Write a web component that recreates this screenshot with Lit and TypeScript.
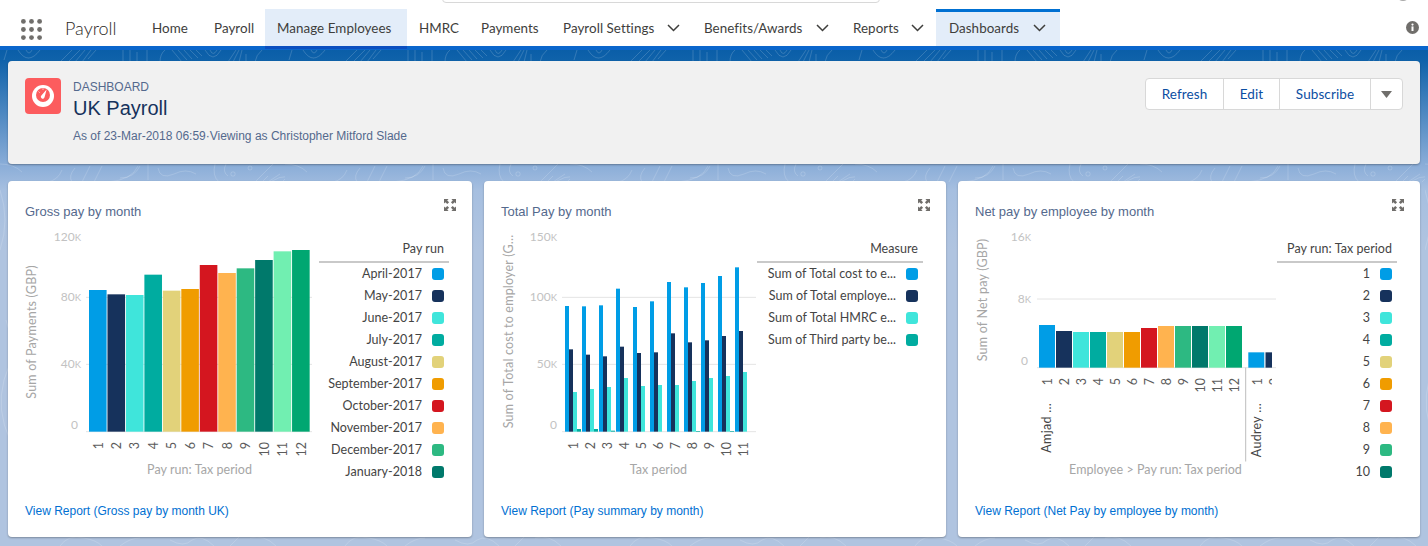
import { LitElement, html, css, svg } from "lit";
import { customElement } from "lit/decorators.js";

const PALETTE = ["#009de6", "#16325c", "#3fe5db", "#00aca0", "#e2d27a", "#f09c00", "#d4161f", "#ffb34f", "#2db982", "#00796b", "#71efb1", "#00a771"];

interface LegendDef { title: string; width: number; items: string[]; }

const zy = (v: number) => 180 + v / 3;
const NAV = [
  { t: "Home", w: 38 }, { t: "Payroll", w: 39 }, { t: "Manage Employees", w: 118, active: true }, { t: "HMRC", w: 38 }, { t: "Payments", w: 58 },
  { t: "Payroll Settings", w: 91, menu: true }, { t: "Benefits/Awards", w: 99, menu: true }, { t: "Reports", w: 45, menu: true },
  { t: "Dashboards", w: 71, menu: true, current: true },
];

const tickLabel = (x: number, y: number, num: string, k = true) => svg`<text class="tick" x=${x} y=${y + 4} text-anchor="end">${num}${k ? svg`<tspan font-size="9.5">K</tspan>` : ""}</text>`;
const rotLabel = (cx: number, top: number, t: string, cls = "xlab") => svg`<text class=${cls} transform="translate(${cx + 4.5} ${top}) rotate(-90)" text-anchor="end">${t}</text>`;
const axisTitle = (cx: number, mid: number, t: string) => svg`<text class="axis-y" transform="translate(${cx + 4.5} ${mid}) rotate(-90)" text-anchor="middle">${t}</text>`;
const grid = (x1: number, x2: number, y: number) => svg`<line class="grid" x1=${x1} x2=${x2} y1=${y} y2=${y}></line>`;

function chart1() {
  const tops = [330, 343, 345, 284, 332, 327, 255, 279, 265, 240, 214, 210];
  const base = zy(755);
  return html`<svg class="chart" width="311" height="265" viewBox="8 225 311 265">
    ${axisTitle(31, 332, "Sum of Payments (GBP)")}
    ${tickLabel(81, 237, "120")}${tickLabel(81, 297, "80")}${tickLabel(81, 364, "40")}${tickLabel(78, 425, "0", false)}
    ${grid(86, 312, zy(352))}${grid(86, 312, zy(553))}${grid(86, 312, base)}
    ${tops.map((t, i) => svg`<rect x=${89 + i * 18.46} y=${zy(t)} width="17.6" height=${base - zy(t)} fill=${PALETTE[i]}></rect>`)}
    ${tops.map((_, i) => rotLabel(98 + i * 18.46, 442, String(i + 1)))}
    <text class="axis" x="199.5" y="474" text-anchor="middle">Pay run: Tax period</text>
  </svg>`;
}

function chart2() {
  const series = [
    [378, 379, 376, 326, 381, 364, 306, 322, 309, 288, 262],
    [508, 524, 529, 500, 519, 517, 460, 487, 481, 468, 453],
    [636, 627, 621, 594, 618, 615, 615, 603, 594, 588, 576],
    [747, 747, 752, 755, 755, 755, 755, 753, 755, 753, 755],
  ];
  const base = zy(755);
  return html`<svg class="chart" width="273" height="265" viewBox="484 225 273 265">
    ${axisTitle(508, 331.5, "Sum of Total cost to employer (G...")}
    ${tickLabel(557, 237, "150")}${tickLabel(557, 297, "100")}${tickLabel(557, 364, "50")}${tickLabel(557, 425, "0", false)}
    ${grid(562, 756, zy(352))}${grid(562, 756, zy(553))}${grid(562, 756, base)}
    ${series.map((vals, s) => vals.map((t, i) => svg`<rect x=${565 + i * 17 + s * 4} y=${zy(t)} width="4" height=${Math.max(base - zy(t), 0)} fill=${PALETTE[s]}></rect>`))}
    ${series[0].map((_, i) => rotLabel(573.3 + i * 17, 442, String(i + 1)))}
    <text class="axis" x="658.5" y="474" text-anchor="middle">Tax period</text>
  </svg>`;
}

function chart3() {
  const tops = [435, 453, 456, 456, 456, 456, 444, 438, 438, 438, 438, 438];
  const base = zy(563);
  return html`<svg class="chart" width="319" height="265" viewBox="958 225 319 265">
    <defs><clipPath id="c3"><rect x="1030" y="225" width="242" height="230"></rect></clipPath></defs>
    ${axisTitle(982, 300, "Sum of Net pay (GBP)")}
    ${tickLabel(1031, 237, "16")}${tickLabel(1031, 299, "8")}${tickLabel(1028, 361, "0", false)}
    ${grid(1037, 1276, zy(357))}${grid(1037, 1276, base)}
    ${tops.map((t, i) => svg`<rect x=${1039 + i * 17} y=${zy(t)} width="16" height=${base - zy(t)} fill=${PALETTE[i]}></rect>`)}
    <g clip-path="url(#c3)">
      <rect x="1248.3" y=${zy(517)} width="16" height=${base - zy(517)} fill=${PALETTE[0]}></rect>
      <rect x="1265.5" y=${zy(517)} width="16" height=${base - zy(517)} fill=${PALETTE[1]}></rect>
      ${rotLabel(1257, 378, "1")}${rotLabel(1274, 378, "2")}
    </g>
    ${tops.map((_, i) => rotLabel(1047 + i * 17, 378, String(i + 1)))}
    <line class="sep" x1="1245.7" x2="1245.7" y1=${base} y2="461.5"></line>
    ${rotLabel(1046.5, 403, "Amjad ...", "grp")}${rotLabel(1256.5, 403, "Audrey ...", "grp")}
    <text class="axis" x="1155.5" y="474" text-anchor="middle">Employee &gt; Pay run: Tax period</text>
  </svg>`;
}

function legend(def: LegendDef) {
  return html`<div class="legend" style="width:${def.width}px">
    <div class="lg-title">${def.title}</div>
    ${def.items.map((t, i) => html`<div class="lg-row"><span>${t}</span><i class="sw" style="background:${PALETTE[i]}"></i></div>`)}
  </div>`;
}

const EXPAND = html`<svg class="expand" width="12" height="12" viewBox="0 0 12 12" fill="#706e6b">
  <path d="M0 0h4.6L3.2 1.4 5.1 3.3 3.3 5.1 1.4 3.2 0 4.6z"></path>
  <path d="M12 0v4.6L10.6 3.2 8.7 5.1 6.9 3.3 8.8 1.4 7.4 0z"></path>
  <path d="M0 12V7.4l1.4 1.4 1.9-1.9 1.8 1.8-1.9 1.9L4.6 12z"></path>
  <path d="M12 12H7.4l1.4-1.4-1.9-1.9 1.8-1.8 1.9 1.9L12 7.4z"></path>
</svg>`;

const CARDS = [
  {
    title: "Gross pay by month", link: "View Report (Gross pay by month UK)", chart: chart1,
    legend: { title: "Pay run", width: 130, items: ["April-2017", "May-2017", "June-2017", "July-2017", "August-2017", "September-2017", "October-2017", "November-2017", "December-2017", "January-2018"] },
  },
  {
    title: "Total Pay by month", link: "View Report (Pay summary by month)", chart: chart2,
    legend: { title: "Measure", width: 166, items: ["Sum of Total cost to e...", "Sum of Total employe...", "Sum of Total HMRC e...", "Sum of Third party be..."] },
  },
  {
    title: "Net pay by employee by month", link: "View Report (Net Pay by employee by month)", chart: chart3,
    legend: { title: "Pay run: Tax period", width: 120, items: ["1", "2", "3", "4", "5", "6", "7", "8", "9", "10"] },
  },
];

const CHEVRON = html`<svg class="chev" width="13" height="8" viewBox="0 0 13 8"><path d="M1 1l5.5 5.5L12 1" fill="none" stroke="#3e3e3c" stroke-width="1.5"></path></svg>`;

@customElement("app-root")
export class AppRoot extends LitElement {
  static styles = css`
    :host { display: block; position: relative; width: 1428px; height: 546px; overflow: hidden; background: #b0c4df; font-family: "Liberation Sans", Arial, sans-serif; }
    .bg { position: absolute; inset: 50px 0 0 0; width: 1428px; height: 496px; background: linear-gradient(#0a5ea8 0, #0f62aa 10px, #8aadd8 115px, #a6bfe0 140px, #b0c4e0 200px); }
    .bg svg { display: block; }
    .page { position: relative; }
    nav { position: relative; height: 46px; background: #fff; display: flex; align-items: flex-end; }
    .search { position: absolute; left: 442px; top: -20px; width: 436px; height: 21px; border: 1px solid #d8d8d8; border-radius: 4px; }
    .avatar { position: absolute; left: 1396px; top: -13px; width: 14px; height: 14px; border-radius: 50%; background: #a8a8a8; }
    .launcher { position: absolute; left: 21px; top: 19px; }
    .app { position: absolute; left: 65px; top: 16px; font: 300 18px/24px Lato, sans-serif; color: #2b2826; }
    .tabs { display: flex; margin-left: 140px; height: 37px; }
    .tab { position: relative; display: flex; align-items: center; gap: 13px; height: 37px; padding: 0 12px; box-sizing: border-box; font: 400 13.4px/18px Lato, sans-serif; letter-spacing: .05px; color: #3e3e3c; white-space: nowrap; }
    .tab span { display: block; }
    .tab.active { background: #e3edf9; }
    .tab.active::after { content: ""; position: absolute; left: 0; right: 0; top: 37px; height: 3px; background: #0b4fc0; }
    .tab.current { background: #e3edf9; padding: 0 14px 0 13px; }
    .tab.current::before { content: ""; position: absolute; left: 0; right: 0; top: 0; height: 3px; background: #0070d2; }
    .info { position: absolute; right: 9px; top: 21px; }
    .band { height: 4px; background: #0a66cc; }
    header { height: 103px; box-sizing: border-box; margin: 11px 8px 0; padding: 17px 17px 0; display: flex; gap: 12px; background: #f1f1f1; border-radius: 4px; box-shadow: 0 1px 2px rgba(0, 0, 0, .3); }
    .logo { flex: none; width: 36px; height: 36px; border-radius: 4px; background: #fc5c5e; display: flex; align-items: center; justify-content: center; }
    .hd-text { flex: 1; color: #54698d; font-size: 12px; line-height: 16px; padding-top: 1px; }
    .hd-title { font-size: 20px; line-height: 26px; color: #16325c; }
    .hd-sub { margin-top: 7px; }
    .btns { flex: none; display: flex; height: 32px; box-sizing: border-box; background: #fff; border: 1px solid #d8d8d8; border-radius: 4px; }
    .btn { display: flex; align-items: center; justify-content: center; box-sizing: border-box; font: 400 13.5px/18px Lato, sans-serif; letter-spacing: .1px; color: #0b4ea2; border-right: 1px solid #d8d8d8; }
    .btn:last-child { border-right: 0; }
    .b1 { width: 78px; } .b2 { width: 56px; } .b3 { width: 91px; } .b4 { width: 31px; }
    .cards { display: grid; grid-template-columns: 464px 462px 462px; gap: 12px; margin: 17px 8px 0; }
    .card { position: relative; height: 356px; background: #fff; border-radius: 4px; box-shadow: 0 1px 2px rgba(0, 0, 0, .3); }
    .head { height: 44px; box-sizing: border-box; display: flex; justify-content: space-between; padding: 18px 16px 0 17px; }
    .c-title { margin-top: 4px; font-size: 13px; line-height: 18px; color: #54698d; }
    .body { display: flex; height: 265px; padding-right: 23px; justify-content: space-between; }
    .chart { display: block; flex: none; }
    .tick { font: 400 12px Lato, sans-serif; fill: #c2c2c2; }
    .xlab { font: 400 12.5px Lato, sans-serif; fill: #5c5c5c; }
    .grp { font: 400 12.5px Lato, sans-serif; letter-spacing: .3px; fill: #444; }
    .axis { font: 400 12.5px Lato, sans-serif; letter-spacing: .05px; fill: #a6a6a6; }
    .axis-y { font: 400 12.5px Lato, sans-serif; letter-spacing: .2px; fill: #a6a6a6; }
    .grid { stroke: #e4e4e4; stroke-width: 1; }
    .sep { stroke: #bdbdbd; stroke-width: 1; }
    .legend { flex: none; padding-top: 14px; font: 400 12.5px/22px Lato, sans-serif; letter-spacing: .05px; color: #444; }
    .lg-title { height: 24px; box-sizing: border-box; padding-right: 5px; text-align: right; border-bottom: 2px solid #c9c9c9; line-height: 20px; }
    .lg-row { height: 22px; display: flex; align-items: center; justify-content: flex-end; gap: 10px; padding-right: 5px; white-space: nowrap; }
    .sw { flex: none; width: 12px; height: 12px; border-radius: 3px; }
    .foot { padding: 13px 0 0 17px; font-size: 12px; line-height: 16px; }
    .foot a { color: #0070d2; text-decoration: none; }
  `;

  render() {
    return html`
      <div class="bg">
        <svg width="1428" height="496" viewBox="0 50 1428 496">
          <defs>
            <pattern id="topo" width="285" height="496" patternUnits="userSpaceOnUse" y="50">
              <g fill="none" stroke="#fff" stroke-opacity=".16" stroke-width="1">
                <path d="M60 12l12-12M68 12l12-12M75 12l10-12M82 12l9-12M88 9l8-9"></path>
                <path d="M123 0v12M130 0v12M137 2v10M147 0v12M160 12q0-8 5-12"></path>
                <path d="M172 0l10 12M178 0l9 10M184 0l8 9M190 0l8 8M196 0l6 6"></path>
                <path d="M205 0q8 14 16 0M210 0q3 7 7 0M228 12l8-12M233 12l6-12M239 12l3-12M246 12v-8M255 12q1-7 7-12"></path>
                <path d="M18 0q10 16 22 0M26 0q3 6 6 0M4 10l3-10"></path>
                <path d="M0 114q14 0 22 8M48 132q10-2 14-12M72 132q-4-6 3-14M82 132l8-16M94 132l8-16"></path>
                <path d="M108 132q24-2 30-16M120 128q14 0 20-12M148 114v16M158 118q2 12 16 6q12-6 22 0"></path>
                <path d="M215 114q-3 12 4 18M226 114q-4 8 2 12"></path>
                <circle cx="233" cy="124" r="2.2"></circle><circle cx="250" cy="118" r="2"></circle>
                <path d="M255 132l18-18M262 132l6-6M268 132l12-8M282 132q8-10 20-8M270 132q20-12 30 2"></path>
                <path d="M0 140q10 30 0 60M14 132q8 30 -4 70q-4 40 4 70M6 270q12 30 -2 60q-8 30 6 60M14 330q10 40 -4 90"></path>
                <path d="M140 132q10 20 0 60q-8 30 4 70q12 50 -2 90q-8 40 6 70M150 132q8 40 2 70q-6 40 4 70q10 60 0 100"></path>
                <path d="M20 486q14-10 30 0M60 496q8-12 24-8q12 2 18 8M120 496q10-8 20-8M170 490q14 8 22 0q10-6 22 6M230 496l10-10M250 488q14-4 26 8"></path>
              </g>
            </pattern>
          </defs>
          <rect x="0" y="50" width="1428" height="496" fill="url(#topo)"></rect>
        </svg>
      </div>
      <div class="page">
        <nav>
          <div class="search"></div>
          <div class="avatar"></div>
          <svg class="launcher" width="21" height="21" viewBox="0 0 21 21" fill="#706e6b">
            ${[2.4, 10.5, 18.6].flatMap((y) => [2.4, 10.5, 18.6].map((x) => svg`<circle cx=${x} cy=${y} r="2.4"></circle>`))}
          </svg>
          <div class="app">Payroll</div>
          <div class="tabs">
            ${NAV.map((n) => html`<div class="tab ${n.active ? "active" : ""} ${n.current ? "current" : ""}"><span style="width:${n.w}px">${n.t}</span>${n.menu ? CHEVRON : ""}</div>`)}
          </div>
          <svg class="info" width="13" height="13" viewBox="0 0 13 13">
            <circle cx="6.5" cy="6.5" r="6.5" fill="#706e6b"></circle>
            <rect x="5.5" y="5.4" width="2" height="4.6" fill="#fff"></rect>
            <circle cx="6.5" cy="3.6" r="1.1" fill="#fff"></circle>
          </svg>
        </nav>
        <div class="band"></div>
        <header>
          <div class="logo">
            <svg width="24" height="24" viewBox="0 0 24 24">
              <circle cx="12" cy="12" r="11" fill="#fff"></circle>
              <circle cx="12" cy="11" r="7" fill="#fc5c5e"></circle>
              <path fill="#fff" d="M15.6 5.6l-2 7.4a1.9 1.9 0 1 1-3.2-1.6z"></path>
              <path stroke="#fff" stroke-width=".8" d="M7.6 7.6l1 1M12 4.4v1.4"></path>
            </svg>
          </div>
          <div class="hd-text">
            <div>DASHBOARD</div>
            <div class="hd-title">UK Payroll</div>
            <div class="hd-sub">As of 23-Mar-2018 06:59·Viewing as Christopher Mitford Slade</div>
          </div>
          <div class="btns">
            <div class="btn b1">Refresh</div>
            <div class="btn b2">Edit</div>
            <div class="btn b3">Subscribe</div>
            <div class="btn b4"><svg width="11" height="7" viewBox="0 0 11 7"><path d="M0 0h11L5.5 7z" fill="#706e6b"></path></svg></div>
          </div>
        </header>
        <div class="cards">
          ${CARDS.map((c) => html`<section class="card">
            <div class="head"><div class="c-title">${c.title}</div>${EXPAND}</div>
            <div class="body">${c.chart()}${legend(c.legend)}</div>
            <div class="foot"><a>${c.link}</a></div>
          </section>`)}
        </div>
      </div>
    `;
  }
}
